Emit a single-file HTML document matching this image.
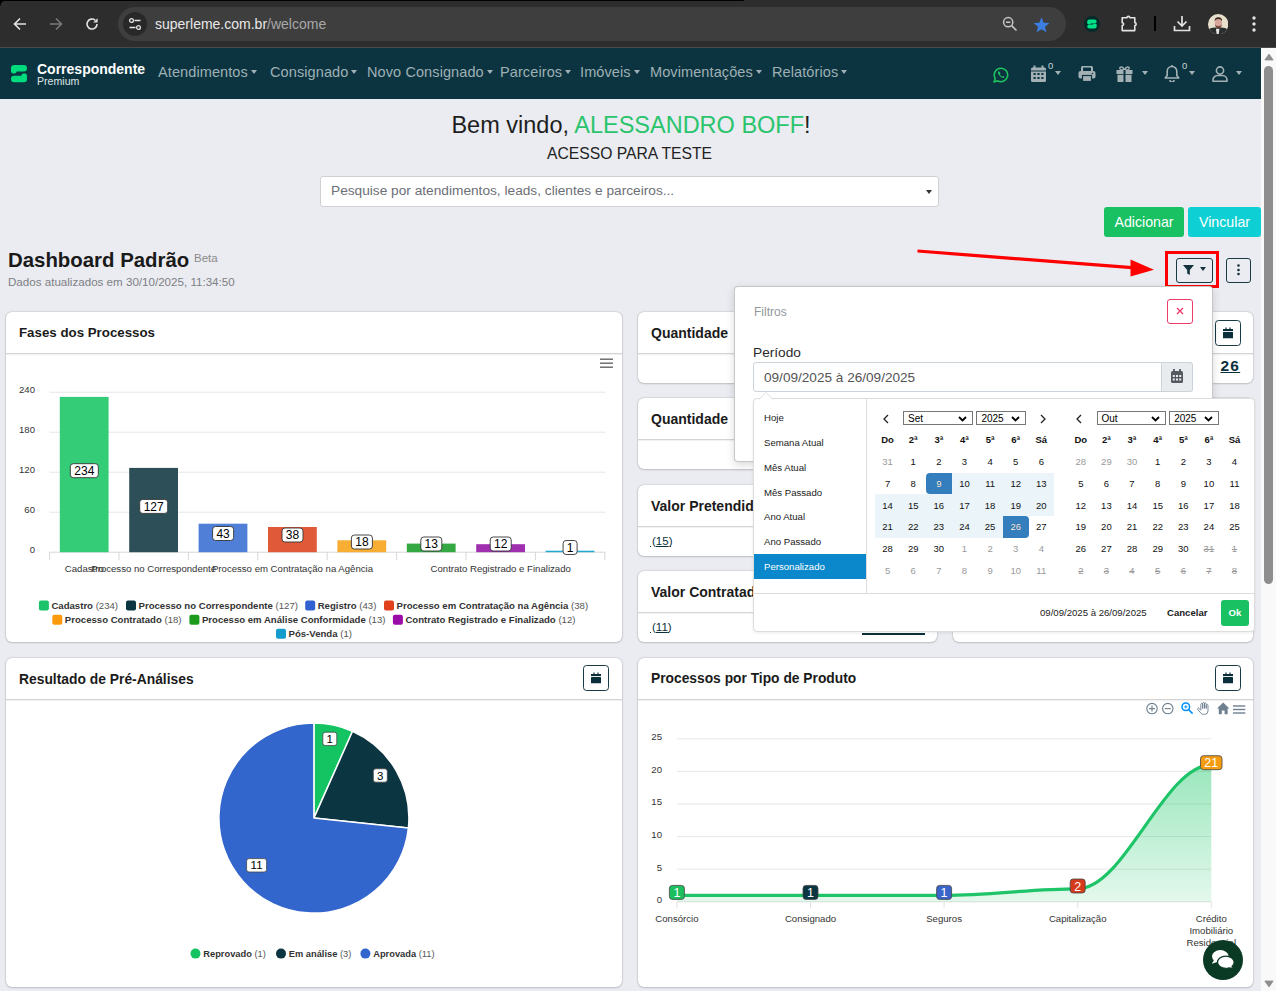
<!DOCTYPE html>
<html><head><meta charset="utf-8">
<style>
*{box-sizing:border-box;margin:0;padding:0}
html,body{width:1276px;height:991px;overflow:hidden;background:#ebecf1;font-family:"Liberation Sans",sans-serif;position:relative}
.a{position:absolute}
.tb{left:0;top:0;width:1276px;height:48px;background:#2d2d2d;border-bottom:1px solid #4a4a4a}
.nav{left:0;top:48px;width:1261px;height:50.5px;background:#0c3440}
.ni{top:64px;font-size:14.5px;color:#9eb0b5;white-space:nowrap;letter-spacing:0.1px}
.car{display:inline-block;width:0;height:0;border-left:3.5px solid transparent;border-right:3.5px solid transparent;border-top:4px solid currentColor;vertical-align:middle;margin-left:3px;margin-top:-2px}
.sb{left:1261px;top:48px;width:15px;height:943px;background:#f9f9f9}
.card{background:#fff;border-radius:6px;box-shadow:0 0 2px rgba(0,0,0,.28),0 1px 2px rgba(0,0,0,.12)}
.ch{position:absolute;left:0;top:0;right:0;height:42px;border-bottom:1px solid #d4d4d4;box-shadow:0 1px 1px rgba(0,0,0,.05)}
.ct{position:absolute;left:13px;top:13px;font-size:14px;font-weight:bold;color:#1b1b1b;white-space:nowrap}
.cd{width:25.6px;text-align:center;font-size:9.5px;color:#111;white-space:nowrap}
.sel{top:411px;height:14px;border:1px solid #767676;background:#fff;font-size:10px;color:#000;padding-left:4px;line-height:14px}
.calbtn{position:absolute;width:26px;height:26px;border:1.1px solid #173a44;border-radius:3.5px;background:#fff}
</style></head><body>
<!-- browser toolbar -->
<div class="a tb"></div>
<div class="a" style="left:0;top:0;width:744px;height:1.2px;background:#000;border-radius:0 0 2px 0"></div><div class="a" style="left:0;top:0;width:6px;height:6px;background:radial-gradient(circle at 100% 100%,transparent 5px,#000 6px)"></div>
<!-- back -->
<svg class="a" style="left:13px;top:17px" width="14" height="14" viewBox="0 0 14 14"><path d="M13 7H2M7 1.5L1.5 7 7 12.5" stroke="#e3e3e3" stroke-width="1.6" fill="none"/></svg>
<svg class="a" style="left:49px;top:17px" width="14" height="14" viewBox="0 0 14 14"><path d="M1 7H12M7 1.5L12.5 7 7 12.5" stroke="#7a7a7a" stroke-width="1.6" fill="none"/></svg>
<svg class="a" style="left:85px;top:17px" width="14" height="14" viewBox="0 0 14 14"><path d="M12 7A5 5 0 1 1 10.2 3.2" stroke="#e3e3e3" stroke-width="1.6" fill="none"/><path d="M12.6 1.2V5.6H8.2Z" fill="#e3e3e3"/></svg>
<div class="a" style="left:118px;top:7px;width:948px;height:34px;border-radius:17px;background:#3e3e3e"></div>
<div class="a" style="left:123px;top:12px;width:24px;height:24px;border-radius:12px;background:#282828"></div>
<svg class="a" style="left:128px;top:17px" width="14" height="14" viewBox="0 0 14 14"><circle cx="3.5" cy="3.5" r="1.9" stroke="#e3e3e3" stroke-width="1.3" fill="none"/><path d="M6.5 3.5H12.5M1.5 10.5H7.5" stroke="#e3e3e3" stroke-width="1.4"/><circle cx="10.5" cy="10.5" r="1.9" stroke="#e3e3e3" stroke-width="1.3" fill="none"/></svg>
<div class="a" style="left:155px;top:16px;font-size:14px;color:#e8e8e8;white-space:nowrap">superleme.com.br<span style="color:#a8a8a8">/welcome</span></div>
<svg class="a" style="left:1002px;top:16px" width="16" height="16" viewBox="0 0 16 16"><circle cx="6.2" cy="6.2" r="4.6" stroke="#c8c8c8" stroke-width="1.5" fill="none"/><path d="M4 6.2H8.4M9.6 9.6L14.5 14.5" stroke="#c8c8c8" stroke-width="1.5"/></svg>
<svg class="a" style="left:1033px;top:17px" width="17" height="16" viewBox="0 0 24 23"><path d="M12 0.5L15.1 8.2 23.4 8.7 17 14 19.1 22.1 12 17.6 4.9 22.1 7 14 0.6 8.7 8.9 8.2Z" fill="#3b7de0"/></svg>
<div class="a" style="left:1084px;top:15.8px;width:16px;height:16px;border-radius:8px;background:#062a2a"></div><svg class="a" style="left:1086px;top:18px" width="12" height="12" viewBox="0 0 12 12"><rect x="1.3" y="1.4" width="9.3" height="4.2" rx="2.1" fill="#00e087"/><rect x="1.3" y="3.4" width="3.4" height="2.8" rx="1" fill="#00e087"/><rect x="1.3" y="6.4" width="9.3" height="4.2" rx="2.1" fill="#00e087"/><rect x="7.2" y="5.8" width="3.4" height="2.8" rx="1" fill="#00e087"/></svg>
<svg class="a" style="left:1119px;top:14px" width="20" height="20" viewBox="0 0 20 20"><path d="M3.2 3.8H8A1.4 1.4 0 0 1 10.8 3.8H15.8V8.7A1.4 1.4 0 0 1 15.8 11.5V16.6H3.2V11.5A1.4 1.4 0 0 0 3.2 8.7Z" stroke="#e3e3e3" stroke-width="1.6" fill="none" stroke-linejoin="round"/></svg>
<div class="a" style="left:1154px;top:16px;width:2px;height:15px;background:#000"></div>
<svg class="a" style="left:1173px;top:15px" width="18" height="17" viewBox="0 0 18 17"><path d="M9 1V11M4.5 6.5L9 11 13.5 6.5M1.5 11V15.5H16.5V11" stroke="#e3e3e3" stroke-width="1.7" fill="none"/></svg>
<svg class="a" style="left:1208px;top:14px" width="20.4" height="20.4" viewBox="0 0 20 20"><defs><clipPath id="av"><circle cx="10" cy="10" r="10"/></clipPath></defs><g clip-path="url(#av)"><rect width="20" height="20" fill="#e6e0cc"/><path d="M0 20V15.5Q3 13.2 7 13.3H13Q17 13.2 20 15.5V20Z" fill="#2a2e2e"/><path d="M7.8 14.5H11.2L10.5 20H8.5Z" fill="#e9e9e9"/><ellipse cx="10.2" cy="8.6" rx="3.6" ry="5.2" fill="#d7a79c"/><path d="M6.5 7Q6.3 3.3 10.2 3.2 14 3.3 13.8 7 12.8 5 10.2 5 7.5 5 6.5 7Z" fill="#3a2a22"/><path d="M6.8 10Q7.5 14 10.2 14.2 12.9 14 13.6 10 12.5 12 10.2 12.1 7.9 12 6.8 10Z" fill="#6a4234"/></g></svg>
<svg class="a" style="left:1251px;top:16px" width="6" height="16" viewBox="0 0 6 16"><circle cx="3" cy="2" r="1.7" fill="#e3e3e3"/><circle cx="3" cy="8" r="1.7" fill="#e3e3e3"/><circle cx="3" cy="14" r="1.7" fill="#e3e3e3"/></svg>
<!-- nav -->
<div class="a nav"></div>
<!-- logo -->
<svg class="a" style="left:10px;top:64px" width="18" height="19" viewBox="0 0 18 19"><rect x="1" y="1" width="16" height="6.6" rx="3.3" fill="#00dc7d"/><rect x="1" y="4" width="5.6" height="5.4" rx="2.2" fill="#00dc7d"/><rect x="1" y="11.8" width="16" height="6.4" rx="3.2" fill="#00dc7d"/><rect x="11.4" y="9.6" width="5.6" height="5.2" rx="2.2" fill="#00dc7d"/></svg>
<div class="a" style="left:37px;top:61px;font-size:14px;font-weight:bold;color:#fff;white-space:nowrap">Correspondente</div>
<div class="a" style="left:37px;top:74.5px;font-size:10.6px;color:#dfe5e6;white-space:nowrap">Premium</div>
<div class="a ni" style="left:158px">Atendimentos<i class="car"></i></div>
<div class="a ni" style="left:270px">Consignado<i class="car"></i></div>
<div class="a ni" style="left:367px">Novo Consignado<i class="car"></i></div>
<div class="a ni" style="left:500px">Parceiros<i class="car"></i></div>
<div class="a ni" style="left:580px">Imóveis<i class="car"></i></div>
<div class="a ni" style="left:650px">Movimentações<i class="car"></i></div>
<div class="a ni" style="left:772px">Relatórios<i class="car"></i></div>
<!-- right icons -->
<svg class="a" style="left:992.8px;top:66.5px" width="16" height="16" viewBox="0 0 16 16"><path d="M8 1.2A6.7 6.7 0 0 0 2.2 11.3L1.2 14.8 4.8 13.8A6.7 6.7 0 1 0 8 1.2Z" stroke="#1ec75e" stroke-width="1.5" fill="none"/><path d="M5.3 4.6C5 5 4.8 5.6 5.2 6.6 5.8 8.2 7.4 10 9.4 10.7 10.3 11 10.9 10.8 11.2 10.4L11.4 9.7 10 9 9.4 9.7C8.4 9.3 7.2 8.2 6.8 7.2L7.4 6.5 6.8 5 6 4.5Z" fill="#1ec75e"/></svg>
<svg class="a" style="left:1031px;top:65px" width="15" height="17" viewBox="0 0 15 17"><path d="M3.5 0.5V3M11.5 0.5V3" stroke="#a3b1b5" stroke-width="2"/><rect x="0" y="2.5" width="15" height="14.5" rx="1.5" fill="#a3b1b5"/><rect x="0" y="5.5" width="15" height="1" fill="#0c3440"/><g fill="#0c3440"><rect x="2.5" y="8" width="2.2" height="2"/><rect x="6.4" y="8" width="2.2" height="2"/><rect x="10.3" y="8" width="2.2" height="2"/><rect x="2.5" y="12" width="2.2" height="2"/><rect x="6.4" y="12" width="2.2" height="2"/><rect x="10.3" y="12" width="2.2" height="2"/></g></svg>
<div class="a" style="left:1048px;top:60px;font-size:9.5px;color:#c9d3d6">0</div>
<i class="a car" style="left:1052px;top:73px;color:#a3b1b5"></i>
<svg class="a" style="left:1078px;top:66px" width="18" height="16" viewBox="0 0 18 16"><path d="M4 5V2A1.5 1.5 0 0 1 5.5 0.5H12.5A1.5 1.5 0 0 1 14 2V5" stroke="#a3b1b5" stroke-width="2" fill="none"/><rect x="0.5" y="5" width="17" height="7.5" rx="2" fill="#a3b1b5"/><rect x="4.5" y="9.5" width="9" height="6" fill="#a3b1b5" stroke="#0c3440" stroke-width="1.2"/><circle cx="14.5" cy="7.5" r="0.8" fill="#0c3440"/></svg>
<svg class="a" style="left:1116px;top:66px" width="17" height="16" viewBox="0 0 17 16"><path d="M8.5 4C7 0 3.5 0.5 3.8 2.5 4 4 6.5 4 8.5 4 10.5 4 13 4 13.2 2.5 13.5 0.5 10 0 8.5 4Z" stroke="#a3b1b5" stroke-width="1.4" fill="none"/><rect x="0.5" y="4" width="16" height="4" fill="#a3b1b5"/><rect x="1.5" y="8.8" width="14" height="7.2" fill="#a3b1b5"/><rect x="7.5" y="4" width="2" height="12" fill="#0c3440"/></svg>
<i class="a car" style="left:1139px;top:73px;color:#a3b1b5"></i>
<svg class="a" style="left:1164px;top:65px" width="16" height="17" viewBox="0 0 16 17"><path d="M8 1.5A4.8 4.8 0 0 0 3.2 6.3V10.5L1.2 13H14.8L12.8 10.5V6.3A4.8 4.8 0 0 0 8 1.5Z" stroke="#a3b1b5" stroke-width="1.6" fill="none" stroke-linejoin="round"/><path d="M8 0V1.6M6 15A2 2 0 0 0 10 15" stroke="#a3b1b5" stroke-width="1.6" fill="none"/></svg>
<div class="a" style="left:1182px;top:60px;font-size:9.5px;color:#c9d3d6">0</div>
<i class="a car" style="left:1186px;top:73px;color:#a3b1b5"></i>
<svg class="a" style="left:1212px;top:66px" width="16" height="16" viewBox="0 0 16 16"><circle cx="8" cy="4.5" r="3.6" stroke="#a3b1b5" stroke-width="1.6" fill="none"/><path d="M1 15.2V14A4.5 4.5 0 0 1 5.5 9.5H10.5A4.5 4.5 0 0 1 15 14V15.2Z" stroke="#a3b1b5" stroke-width="1.6" fill="none" stroke-linejoin="round"/></svg>
<i class="a car" style="left:1233px;top:73px;color:#a3b1b5"></i>
<!-- welcome -->
<div class="a" style="left:0;top:112px;width:1262px;text-align:center;font-size:23.5px;color:#1e1e1e;white-space:nowrap">Bem vindo, <span style="color:#2ac46d">ALESSANDRO BOFF</span>!</div>
<div class="a" style="left:547px;top:145px;font-size:15.7px;color:#222;white-space:nowrap">ACESSO PARA TESTE</div>
<div class="a" style="left:320px;top:176px;width:619px;height:31px;background:#fff;border:1px solid #cfd1d6;border-radius:3px"></div>
<div class="a" style="left:331px;top:183px;font-size:13.7px;color:#6c6f76;white-space:nowrap">Pesquise por atendimentos, leads, clientes e parceiros...</div>
<i class="a car" style="left:923px;top:192px;color:#333;border-top-width:4px;border-left-width:3px;border-right-width:3px"></i>
<div class="a" style="left:1104px;top:207px;width:80px;height:30px;background:#19c163;border-radius:3px;color:#fff;font-size:14.2px;line-height:30px;text-align:center">Adicionar</div>
<div class="a" style="left:1188px;top:207px;width:73px;height:30px;background:#0ed0d4;border-radius:3px;color:#fff;font-size:14.2px;line-height:30px;text-align:center">Vincular</div>
<div class="a" style="left:8px;top:249px;font-size:20.4px;font-weight:bold;color:#1a1a1a;white-space:nowrap">Dashboard Padrão</div>
<div class="a" style="left:194px;top:252px;font-size:11.5px;color:#8a8a8a;white-space:nowrap">Beta</div>
<div class="a" style="left:8px;top:275px;font-size:11.6px;color:#7d7f85;white-space:nowrap">Dados atualizados em 30/10/2025, 11:34:50</div>
<!-- cards -->
<!--C1-->
<div class="a card" style="left:6px;top:312px;width:616px;height:330px"><div class="ch"></div><div class="ct" style="font-size:13.3px">Fases dos Processos</div></div>
<svg class="a" style="left:0;top:300px" width="640" height="350" viewBox="0 300 640 350" font-family="Liberation Sans, sans-serif"><rect x="600" y="358.5" width="13" height="1.4" fill="#666"/><rect x="600" y="362.5" width="13" height="1.4" fill="#666"/><rect x="600" y="366.5" width="13" height="1.4" fill="#666"/><text x="35" y="553.2" font-size="9.6" fill="#333" text-anchor="end">0</text><rect x="49.5" y="511.7" width="556" height="1" fill="#e6e6e6"/><text x="35" y="513.2" font-size="9.6" fill="#333" text-anchor="end">60</text><rect x="49.5" y="471.7" width="556" height="1" fill="#e6e6e6"/><text x="35" y="473.2" font-size="9.6" fill="#333" text-anchor="end">120</text><rect x="49.5" y="431.7" width="556" height="1" fill="#e6e6e6"/><text x="35" y="433.2" font-size="9.6" fill="#333" text-anchor="end">180</text><rect x="49.5" y="391.7" width="556" height="1" fill="#e6e6e6"/><text x="35" y="393.2" font-size="9.6" fill="#333" text-anchor="end">240</text><rect x="49.5" y="551.7" width="556" height="1" fill="#d8d8d8"/><rect x="49.1" y="552.2" width="1" height="8" fill="#d8d8d8"/><rect x="118.5" y="552.2" width="1" height="8" fill="#d8d8d8"/><rect x="187.9" y="552.2" width="1" height="8" fill="#d8d8d8"/><rect x="257.3" y="552.2" width="1" height="8" fill="#d8d8d8"/><rect x="326.7" y="552.2" width="1" height="8" fill="#d8d8d8"/><rect x="396.1" y="552.2" width="1" height="8" fill="#d8d8d8"/><rect x="465.5" y="552.2" width="1" height="8" fill="#d8d8d8"/><rect x="534.9" y="552.2" width="1" height="8" fill="#d8d8d8"/><rect x="604.3" y="552.2" width="1" height="8" fill="#d8d8d8"/><rect x="59.8" y="396.9" width="48.8" height="155.3" fill="#35cc77"/><rect x="129.2" y="467.9" width="48.8" height="84.3" fill="#2d4f58"/><rect x="198.6" y="523.7" width="48.8" height="28.5" fill="#4f7fd6"/><rect x="268.0" y="527.0" width="48.8" height="25.2" fill="#e05a3a"/><rect x="337.4" y="540.3" width="48.8" height="11.9" fill="#f8ad33"/><rect x="406.8" y="543.6" width="48.8" height="8.6" fill="#33a843"/><rect x="476.2" y="544.2" width="48.8" height="8.0" fill="#a02fb0"/><rect x="545.6" y="550.7" width="48.8" height="1.5" fill="#24a9d1"/><rect x="70.3" y="463.7" width="28" height="14" rx="3" fill="#fff" stroke="#333" stroke-width="0.9"/><text x="84.3" y="475.0" font-size="12" fill="#000" text-anchor="middle">234</text><rect x="139.7" y="499.4" width="28" height="14" rx="3" fill="#fff" stroke="#333" stroke-width="0.9"/><text x="153.7" y="510.7" font-size="12" fill="#000" text-anchor="middle">127</text><rect x="212.6" y="526.5" width="21" height="14" rx="3" fill="#fff" stroke="#333" stroke-width="0.9"/><text x="223.1" y="537.8" font-size="12" fill="#000" text-anchor="middle">43</text><rect x="282.0" y="528.0" width="21" height="14" rx="3" fill="#fff" stroke="#333" stroke-width="0.9"/><text x="292.5" y="539.3" font-size="12" fill="#000" text-anchor="middle">38</text><rect x="351.4" y="535.0" width="21" height="14" rx="3" fill="#fff" stroke="#333" stroke-width="0.9"/><text x="361.9" y="546.3" font-size="12" fill="#000" text-anchor="middle">18</text><rect x="420.8" y="537.0" width="21" height="14" rx="3" fill="#fff" stroke="#333" stroke-width="0.9"/><text x="431.3" y="548.3" font-size="12" fill="#000" text-anchor="middle">13</text><rect x="490.2" y="537.0" width="21" height="14" rx="3" fill="#fff" stroke="#333" stroke-width="0.9"/><text x="500.7" y="548.3" font-size="12" fill="#000" text-anchor="middle">12</text><rect x="563.1" y="540.5" width="14" height="14" rx="3" fill="#fff" stroke="#333" stroke-width="0.9"/><text x="570.1" y="551.8" font-size="12" fill="#000" text-anchor="middle">1</text><text x="84.3" y="571.5" font-size="9.6" fill="#333" text-anchor="middle">Cadastro</text><text x="153.7" y="571.5" font-size="9.6" fill="#333" text-anchor="middle">Processo no Correspondente</text><text x="292.5" y="571.5" font-size="9.6" fill="#333" text-anchor="middle">Processo em Contratação na Agência</text><text x="500.7" y="571.5" font-size="9.6" fill="#333" text-anchor="middle">Contrato Registrado e Finalizado</text><rect x="38.9" y="600.6" width="10" height="10" rx="2" fill="#1bc46a"/><text x="51.4" y="609.0" font-size="9.6" fill="#333"><tspan font-weight="bold">Cadastro</tspan> <tspan fill="#555">(234)</tspan></text><rect x="126.0" y="600.6" width="10" height="10" rx="2" fill="#0b3540"/><text x="138.5" y="609.0" font-size="9.6" fill="#333"><tspan font-weight="bold">Processo no Correspondente</tspan> <tspan fill="#555">(127)</tspan></text><rect x="305.2" y="600.6" width="10" height="10" rx="2" fill="#3160d0"/><text x="317.7" y="609.0" font-size="9.6" fill="#333"><tspan font-weight="bold">Registro</tspan> <tspan fill="#555">(43)</tspan></text><rect x="384.0" y="600.6" width="10" height="10" rx="2" fill="#e0401b"/><text x="396.5" y="609.0" font-size="9.6" fill="#333"><tspan font-weight="bold">Processo em Contratação na Agência</tspan> <tspan fill="#555">(38)</tspan></text><rect x="52.3" y="614.7" width="10" height="10" rx="2" fill="#fb9a0c"/><text x="64.8" y="623.1" font-size="9.6" fill="#333"><tspan font-weight="bold">Processo Contratado</tspan> <tspan fill="#555">(18)</tspan></text><rect x="189.4" y="614.7" width="10" height="10" rx="2" fill="#1c9a1c"/><text x="201.9" y="623.1" font-size="9.6" fill="#333"><tspan font-weight="bold">Processo em Análise Conformidade</tspan> <tspan fill="#555">(13)</tspan></text><rect x="392.9" y="614.7" width="10" height="10" rx="2" fill="#9a0ca8"/><text x="405.4" y="623.1" font-size="9.6" fill="#333"><tspan font-weight="bold">Contrato Registrado e Finalizado</tspan> <tspan fill="#555">(12)</tspan></text><rect x="276.0" y="628.8" width="10" height="10" rx="2" fill="#149ccc"/><text x="288.5" y="637.2" font-size="9.6" fill="#333"><tspan font-weight="bold">Pós-Venda</tspan> <tspan fill="#555">(1)</tspan></text></svg>
<!--/C1-->
<!--C2-->
<div class="a card" style="left:638px;top:312px;width:299px;height:71px"><div class="ch"></div><div class="ct" style="font-size:14px">Quantidade</div></div>
<div class="a card" style="left:953px;top:312px;width:300px;height:71px"><div class="ch"></div></div>
<div class="a card" style="left:638px;top:398px;width:299px;height:71px"><div class="ch"></div><div class="ct" style="font-size:14px">Quantidade</div></div>
<div class="a card" style="left:953px;top:398px;width:300px;height:71px"><div class="ch"></div></div>
<div class="a card" style="left:638px;top:485px;width:299px;height:71px"><div class="ch"></div><div class="ct" style="font-size:14px">Valor Pretendido</div></div>
<div class="a card" style="left:953px;top:485px;width:300px;height:71px"><div class="ch"></div></div>
<div class="a card" style="left:638px;top:571px;width:299px;height:71px"><div class="ch"></div><div class="ct" style="font-size:14px">Valor Contratado</div></div>
<div class="a card" style="left:953px;top:571px;width:300px;height:71px"><div class="ch"></div></div>
<div class="a" style="left:652px;top:535px;font-size:11.5px;color:#0b2f3a;white-space:nowrap">(<u>15</u>)</div><div class="a" style="left:650px;top:546px;width:1.2px;height:1.2px;background:#0b2f3a"></div><div class="a" style="left:670px;top:546px;width:1.2px;height:1.2px;background:#0b2f3a"></div>
<div class="a" style="left:652px;top:621px;font-size:11.5px;color:#0b2f3a;white-space:nowrap">(<u>11</u>)</div><div class="a" style="left:650px;top:632px;width:1.2px;height:1.2px;background:#0b2f3a"></div><div class="a" style="left:668px;top:632px;width:1.2px;height:1.2px;background:#0b2f3a"></div>
<div class="a" style="left:862px;top:633px;width:63px;height:1.5px;background:#0b2f3a"></div>
<div class="a" style="left:1220.5px;top:357px;font-size:15.5px;font-weight:bold;color:#0b2f3a;text-decoration:underline;white-space:nowrap;letter-spacing:1.2px">26</div>
<div class="calbtn" style="left:1215px;top:320px"><svg width="10" height="12" viewBox="0 0 10 12" style="position:absolute;left:7px;top:6px"><path d="M3 0.5V2.5M7 0.5V2.5" stroke="#0b2f3a" stroke-width="1.2"/><rect x="0" y="2" width="10" height="2.1" fill="#0b2f3a"/><rect x="0" y="4.9" width="10" height="6.4" rx="0.6" fill="#0b2f3a"/></svg></div>
<!--/C2-->
<!--C3-->
<div class="a card" style="left:6px;top:658px;width:616px;height:329px"><div class="ch"></div><div class="ct" style="font-size:13.85px">Resultado de Pré-Análises</div></div>
<div class="calbtn" style="left:583px;top:665px"><svg width="10" height="12" viewBox="0 0 10 12" style="position:absolute;left:7px;top:6px"><path d="M3 0.5V2.5M7 0.5V2.5" stroke="#0b2f3a" stroke-width="1.2"/><rect x="0" y="2" width="10" height="2.1" fill="#0b2f3a"/><rect x="0" y="4.9" width="10" height="6.4" rx="0.6" fill="#0b2f3a"/></svg></div>
<div class="a card" style="left:638px;top:658px;width:615px;height:329px"><div class="ch"></div><div class="ct" style="font-size:13.8px">Processos por Tipo de Produto</div></div>
<div class="calbtn" style="left:1215px;top:665px"><svg width="10" height="12" viewBox="0 0 10 12" style="position:absolute;left:7px;top:6px"><path d="M3 0.5V2.5M7 0.5V2.5" stroke="#0b2f3a" stroke-width="1.2"/><rect x="0" y="2" width="10" height="2.1" fill="#0b2f3a"/><rect x="0" y="4.9" width="10" height="6.4" rx="0.6" fill="#0b2f3a"/></svg></div>
<svg class="a" style="left:0;top:700px" width="1262" height="290" viewBox="0 700 1262 290" font-family="Liberation Sans, sans-serif"><path d="M313.9 818.1L313.90 723.10A95 95 0 0 1 352.54 731.31Z" fill="#14c462" stroke="#fff" stroke-width="1.5" stroke-linejoin="round"/><path d="M313.9 818.1L352.54 731.31A95 95 0 0 1 408.38 828.03Z" fill="#0b3540" stroke="#fff" stroke-width="1.5" stroke-linejoin="round"/><path d="M313.9 818.1L408.38 828.03A95 95 0 1 1 313.90 723.10Z" fill="#3366cc" stroke="#fff" stroke-width="1.5" stroke-linejoin="round"/><rect x="322.8" y="732.2" width="14" height="13.4" rx="2.5" fill="#fff" stroke="#444" stroke-width="0.8"/><text x="329.8" y="742.9" font-size="11.5" fill="#000" text-anchor="middle">1</text><rect x="373.3" y="768.8" width="14" height="13.4" rx="2.5" fill="#fff" stroke="#444" stroke-width="0.8"/><text x="380.3" y="779.5" font-size="11.5" fill="#000" text-anchor="middle">3</text><rect x="246.6" y="858.6" width="20" height="13.4" rx="2.5" fill="#fff" stroke="#444" stroke-width="0.8"/><text x="256.6" y="869.3" font-size="11.5" fill="#000" text-anchor="middle">11</text><circle cx="195.5" cy="953.6" r="5" fill="#14c462"/><text x="203.3" y="956.8" font-size="9.3" fill="#333"><tspan font-weight="bold">Reprovado</tspan> <tspan fill="#555">(1)</tspan></text><circle cx="281" cy="953.6" r="5" fill="#0b3540"/><text x="288.8" y="956.8" font-size="9.3" fill="#333"><tspan font-weight="bold">Em análise</tspan> <tspan fill="#555">(3)</tspan></text><circle cx="365.4" cy="953.6" r="5" fill="#3366cc"/><text x="373.2" y="956.8" font-size="9.3" fill="#333"><tspan font-weight="bold">Aprovada</tspan> <tspan fill="#555">(11)</tspan></text><rect x="676.9" y="901.3" width="534.4" height="1" fill="#e0e0e0"/><text x="662" y="903.1" font-size="9.6" fill="#333" text-anchor="end">0</text><rect x="676.9" y="868.7" width="534.4" height="1" fill="#e6e6e6"/><text x="662" y="870.5" font-size="9.6" fill="#333" text-anchor="end">5</text><rect x="676.9" y="836.1" width="534.4" height="1" fill="#e6e6e6"/><text x="662" y="837.9" font-size="9.6" fill="#333" text-anchor="end">10</text><rect x="676.9" y="803.5" width="534.4" height="1" fill="#e6e6e6"/><text x="662" y="805.3" font-size="9.6" fill="#333" text-anchor="end">15</text><rect x="676.9" y="770.9" width="534.4" height="1" fill="#e6e6e6"/><text x="662" y="772.7" font-size="9.6" fill="#333" text-anchor="end">20</text><rect x="676.9" y="738.3" width="534.4" height="1" fill="#e6e6e6"/><text x="662" y="740.1" font-size="9.6" fill="#333" text-anchor="end">25</text><rect x="676.4" y="901.8" width="1" height="6" fill="#e0e0e0"/><rect x="810.0" y="901.8" width="1" height="6" fill="#e0e0e0"/><rect x="943.6" y="901.8" width="1" height="6" fill="#e0e0e0"/><rect x="1077.2" y="901.8" width="1" height="6" fill="#e0e0e0"/><rect x="1210.8" y="901.8" width="1" height="6" fill="#e0e0e0"/><defs><linearGradient id="gf" x1="0" y1="0" x2="0" y2="1"><stop offset="0" stop-color="#1ec86a" stop-opacity="0.45"/><stop offset="1" stop-color="#1ec86a" stop-opacity="0.12"/></linearGradient></defs><path d="M676.9 895.3C723.7 895.3 763.7 895.3 810.5 895.3C857.3 895.3 897.3 895.3 944.1 895.3C990.9 895.3 1030.9 888.8 1077.7 888.8C1124.5 888.8 1164.5 764.9 1211.3 764.9L1211.3 901.8L676.9 901.8Z" fill="url(#gf)" transform="translate(0,0)"/><path d="M676.9 895.3C723.7 895.3 763.7 895.3 810.5 895.3C857.3 895.3 897.3 895.3 944.1 895.3C990.9 895.3 1030.9 888.8 1077.7 888.8C1124.5 888.8 1164.5 764.9 1211.3 764.9" fill="none" stroke="#1ec468" stroke-width="3.2"/><rect x="669.4" y="885.4" width="15" height="14" rx="3" fill="#1bbf5e" stroke="#444" stroke-width="0.8"/><text x="676.9" y="897.0" font-size="12.5" fill="#fff" text-anchor="middle">1</text><rect x="803.0" y="885.4" width="15" height="14" rx="3" fill="#0b3540" stroke="#444" stroke-width="0.8"/><text x="810.5" y="897.0" font-size="12.5" fill="#fff" text-anchor="middle">1</text><rect x="936.6" y="885.4" width="15" height="14" rx="3" fill="#3b64c8" stroke="#444" stroke-width="0.8"/><text x="944.1" y="897.0" font-size="12.5" fill="#fff" text-anchor="middle">1</text><rect x="1070.2" y="879.0" width="15" height="14" rx="3" fill="#d63a1c" stroke="#444" stroke-width="0.8"/><text x="1077.7" y="890.6" font-size="12.5" fill="#fff" text-anchor="middle">2</text><rect x="1200.5" y="755.7" width="21.5" height="14" rx="3" fill="#f59b0f" stroke="#444" stroke-width="0.8"/><text x="1211.3" y="767.3" font-size="12.5" fill="#fff" text-anchor="middle">21</text><text x="676.9" y="921.8" font-size="9.6" fill="#333" text-anchor="middle">Consórcio</text><text x="810.5" y="921.8" font-size="9.6" fill="#333" text-anchor="middle">Consignado</text><text x="944.1" y="921.8" font-size="9.6" fill="#333" text-anchor="middle">Seguros</text><text x="1077.7" y="921.8" font-size="9.6" fill="#333" text-anchor="middle">Capitalização</text><text x="1211.3" y="921.8" font-size="9.6" fill="#333" text-anchor="middle">Crédito</text><text x="1211.3" y="933.8" font-size="9.6" fill="#333" text-anchor="middle">Imobiliário</text><text x="1211.3" y="945.8" font-size="9.6" fill="#333" text-anchor="middle">Residencial</text><g fill="none" stroke="#6e7f8f" stroke-width="1.1"><circle cx="1152" cy="708.6" r="5.2"/><path d="M1149 708.6H1155M1152 705.6V711.6"/><circle cx="1167.8" cy="708.6" r="5.2"/><path d="M1164.8 708.6H1170.8"/></g><g fill="none" stroke="#008ffb" stroke-width="1.5"><circle cx="1185.8" cy="706.8" r="3.8"/><path d="M1188.6 709.6L1192.6 713.6"/><path d="M1184.3 706.8H1187.3M1185.8 705.3V708.3" stroke-width="1"/></g><path d="M1200.8 710.2V704.4A0.9 0.9 0 0 1 1202.6 704.4V708.5V703.4A0.9 0.9 0 0 1 1204.4 703.4V708.5V703.8A0.9 0.9 0 0 1 1206.2 703.8V708.5V705.4A0.9 0.9 0 0 1 1208 705.4V711A3.3 3.3 0 0 1 1204.7 714.3H1203.3A3 3 0 0 1 1200.9 713.1L1197.8 709.7A0.9 0.9 0 0 1 1199.2 708.5L1200.8 710.2" stroke="#6e7f8f" stroke-width="0.9" fill="none" stroke-linejoin="round"/><path d="M1217 708.5L1223.2 702.5 1229.4 708.5H1227.6V714.2H1224.6V710.5H1221.8V714.2H1218.8V708.5Z" fill="#6e7f8f"/><g fill="#6e7f8f"><rect x="1233" y="705.3" width="12.3" height="1.4"/><rect x="1233" y="708.8" width="12.3" height="1.4"/><rect x="1233" y="712.3" width="12.3" height="1.4"/></g></svg>
<div class="a" style="left:1203px;top:940px;width:40px;height:40px;border-radius:20px;background:#0b3a24"></div>
<svg class="a" style="left:1208px;top:946px" width="30" height="26" viewBox="0 0 30 26"><ellipse cx="12.3" cy="10.3" rx="8.3" ry="6.2" fill="#fff"/><path d="M6 14L3.8 17.8 10 15.8Z" fill="#fff"/><path d="M17.8 10.2C22.5 10.2 26.2 13 26.2 16.3 26.2 18 25.4 19.3 24.2 20.3L26.5 22.5 20.5 22C19.6 22.3 18.7 22.4 17.8 22.4 13 22.4 9.5 19.6 9.5 16.3 9.5 13 13 10.2 17.8 10.2Z" fill="#fff" stroke="#0b3a24" stroke-width="1.3"/></svg>
<!--/C3-->
<!-- arrow -->
<svg class="a" style="left:0;top:0" width="1262" height="300" viewBox="0 0 1262 300"><path d="M917.5 251L1132 267.6" stroke="#ff0000" stroke-width="3.2"/><path d="M1130.5 259.5L1154 269.8 1130.5 276.5Z" fill="#ff0000"/></svg>
<div class="a" style="left:1165px;top:251px;width:54px;height:37px;border:3.2px solid #ff0000"></div>
<div class="a" style="left:1176px;top:258px;width:37px;height:25px;border:1.4px solid #173a44;border-radius:3px"></div>
<svg class="a" style="left:1183px;top:265px" width="11" height="10" viewBox="0 0 11 10"><path d="M0 0H11L6.8 5V10L4.2 8.4V5Z" fill="#14333d"/></svg>
<i class="a car" style="left:1197px;top:269px;color:#14333d"></i>
<div class="a" style="left:1226px;top:258px;width:25px;height:25px;border:1.4px solid #173a44;border-radius:3px"></div>
<svg class="a" style="left:1236px;top:263px" width="5" height="14" viewBox="0 0 5 14"><circle cx="2.5" cy="2.5" r="1.3" fill="#14333d"/><circle cx="2.5" cy="7" r="1.3" fill="#14333d"/><circle cx="2.5" cy="11" r="1.3" fill="#14333d"/></svg>
<!--P-->
<div class="a" style="left:733.5px;top:285.5px;width:479px;height:176.5px;background:#fff;border-radius:4px;border:1px solid rgba(0,0,0,.22);box-shadow:0 3px 8px rgba(0,0,0,.15)"></div>
<div class="a" style="left:754px;top:304.5px;font-size:12px;color:#94979c">Filtros</div>
<div class="a" style="left:1167px;top:299px;width:26px;height:25px;border:1.2px solid #ec3b6a;border-radius:3px"></div>
<svg class="a" style="left:1176px;top:307px" width="8" height="8" viewBox="0 0 8 8"><path d="M1 1L7 7M7 1L1 7" stroke="#ec3b6a" stroke-width="1.4"/></svg>
<div class="a" style="left:753px;top:344.7px;font-size:13.7px;color:#2a2a2a">Período</div>
<div class="a" style="left:753px;top:362px;width:440px;height:30px;border:1px solid #cdd3da;border-radius:3px;background:#fff"></div>
<div class="a" style="left:1161px;top:362px;width:32px;height:30px;border:1px solid #cdd3da;border-radius:0 3px 3px 0;background:#e9ecef"></div>
<svg class="a" style="left:1171px;top:369px" width="12" height="14" viewBox="0 0 12 14"><path d="M3 0V2.5M9 0V2.5" stroke="#555a60" stroke-width="1.8"/><rect x="0" y="2" width="12" height="12" rx="1.5" fill="#555a60"/><g fill="#e9ecef"><rect x="1.8" y="6" width="2" height="2"/><rect x="5" y="6" width="2" height="2"/><rect x="8.2" y="6" width="2" height="2"/><rect x="1.8" y="9.5" width="2" height="2"/><rect x="5" y="9.5" width="2" height="2"/><rect x="8.2" y="9.5" width="2" height="2"/></g></svg>
<div class="a" style="left:764px;top:369.7px;font-size:13.6px;color:#555">09/09/2025 à 26/09/2025</div>
<div class="a" style="left:753px;top:398px;width:502px;height:234px;background:#fff;border:1px solid #ddd;border-radius:4px;box-shadow:0 1px 3px rgba(0,0,0,.08)"></div>
<svg class="a" style="left:758px;top:391px" width="18" height="9" viewBox="0 0 18 9"><path d="M1 8.5L8 1.5 15 8.5" fill="#fff" stroke="#ddd" stroke-width="1"/></svg>
<div class="a" style="left:866px;top:399px;width:1px;height:194px;background:#ddd"></div>
<div class="a" style="left:754px;top:593px;width:500px;height:1px;background:#ddd"></div>
<div class="a" style="left:764px;top:412.0px;font-size:9.6px;color:#222;white-space:nowrap">Hoje</div>
<div class="a" style="left:764px;top:436.8px;font-size:9.6px;color:#222;white-space:nowrap">Semana Atual</div>
<div class="a" style="left:764px;top:461.7px;font-size:9.6px;color:#222;white-space:nowrap">Mês Atual</div>
<div class="a" style="left:764px;top:486.9px;font-size:9.6px;color:#222;white-space:nowrap">Mês Passado</div>
<div class="a" style="left:764px;top:510.9px;font-size:9.6px;color:#222;white-space:nowrap">Ano Atual</div>
<div class="a" style="left:764px;top:535.9px;font-size:9.6px;color:#222;white-space:nowrap">Ano Passado</div>
<div class="a" style="left:754px;top:554px;width:112px;height:24.5px;background:#0a88cb"></div>
<div class="a" style="left:764px;top:560.8px;font-size:9.6px;color:#fff;white-space:nowrap">Personalizado</div>
<div class="a" style="left:951.5px;top:472.5px;width:102.5px;height:21.5px;background:#ebf4f8"></div>
<div class="a" style="left:875px;top:494px;width:179px;height:22px;background:#ebf4f8"></div>
<div class="a" style="left:875px;top:516px;width:128px;height:22px;background:#ebf4f8"></div>
<div class="a" style="left:926px;top:473px;width:26px;height:21px;background:#357ebd;border-radius:4px 0 0 4px"></div>
<div class="a" style="left:1003px;top:516px;width:26px;height:22px;background:#357ebd;border-radius:0 4px 4px 0"></div>
<div class="a cd" style="left:874.8px;top:434.1px;font-weight:bold">Do</div>
<div class="a cd" style="left:900.4px;top:434.1px;font-weight:bold">2ª</div>
<div class="a cd" style="left:926.0px;top:434.1px;font-weight:bold">3ª</div>
<div class="a cd" style="left:951.7px;top:434.1px;font-weight:bold">4ª</div>
<div class="a cd" style="left:977.3px;top:434.1px;font-weight:bold">5ª</div>
<div class="a cd" style="left:1002.9px;top:434.1px;font-weight:bold">6ª</div>
<div class="a cd" style="left:1028.5px;top:434.1px;font-weight:bold">Sá</div>
<div class="a cd" style="left:874.8px;top:455.9px;color:#999">31</div>
<div class="a cd" style="left:900.4px;top:455.9px;color:#111">1</div>
<div class="a cd" style="left:926.0px;top:455.9px;color:#111">2</div>
<div class="a cd" style="left:951.7px;top:455.9px;color:#111">3</div>
<div class="a cd" style="left:977.3px;top:455.9px;color:#111">4</div>
<div class="a cd" style="left:1002.9px;top:455.9px;color:#111">5</div>
<div class="a cd" style="left:1028.5px;top:455.9px;color:#111">6</div>
<div class="a cd" style="left:874.8px;top:477.6px;color:#111">7</div>
<div class="a cd" style="left:900.4px;top:477.6px;color:#111">8</div>
<div class="a cd" style="left:926.0px;top:477.6px;">9</div>
<div class="a cd" style="left:951.7px;top:477.6px;color:#111">10</div>
<div class="a cd" style="left:977.3px;top:477.6px;color:#111">11</div>
<div class="a cd" style="left:1002.9px;top:477.6px;color:#111">12</div>
<div class="a cd" style="left:1028.5px;top:477.6px;color:#111">13</div>
<div class="a cd" style="left:874.8px;top:499.6px;color:#111">14</div>
<div class="a cd" style="left:900.4px;top:499.6px;color:#111">15</div>
<div class="a cd" style="left:926.0px;top:499.6px;color:#111">16</div>
<div class="a cd" style="left:951.7px;top:499.6px;color:#111">17</div>
<div class="a cd" style="left:977.3px;top:499.6px;color:#111">18</div>
<div class="a cd" style="left:1002.9px;top:499.6px;color:#111">19</div>
<div class="a cd" style="left:1028.5px;top:499.6px;color:#111">20</div>
<div class="a cd" style="left:874.8px;top:521.4px;color:#111">21</div>
<div class="a cd" style="left:900.4px;top:521.4px;color:#111">22</div>
<div class="a cd" style="left:926.0px;top:521.4px;color:#111">23</div>
<div class="a cd" style="left:951.7px;top:521.4px;color:#111">24</div>
<div class="a cd" style="left:977.3px;top:521.4px;color:#111">25</div>
<div class="a cd" style="left:1002.9px;top:521.4px;">26</div>
<div class="a cd" style="left:1028.5px;top:521.4px;color:#111">27</div>
<div class="a cd" style="left:874.8px;top:543.0px;color:#111">28</div>
<div class="a cd" style="left:900.4px;top:543.0px;color:#111">29</div>
<div class="a cd" style="left:926.0px;top:543.0px;color:#111">30</div>
<div class="a cd" style="left:951.7px;top:543.0px;color:#999">1</div>
<div class="a cd" style="left:977.3px;top:543.0px;color:#999">2</div>
<div class="a cd" style="left:1002.9px;top:543.0px;color:#999">3</div>
<div class="a cd" style="left:1028.5px;top:543.0px;color:#999">4</div>
<div class="a cd" style="left:874.8px;top:564.8px;color:#999">5</div>
<div class="a cd" style="left:900.4px;top:564.8px;color:#999">6</div>
<div class="a cd" style="left:926.0px;top:564.8px;color:#999">7</div>
<div class="a cd" style="left:951.7px;top:564.8px;color:#999">8</div>
<div class="a cd" style="left:977.3px;top:564.8px;color:#999">9</div>
<div class="a cd" style="left:1002.9px;top:564.8px;color:#999">10</div>
<div class="a cd" style="left:1028.5px;top:564.8px;color:#999">11</div>
<div class="a cd" style="left:1068.0px;top:434.1px;font-weight:bold">Do</div>
<div class="a cd" style="left:1093.6px;top:434.1px;font-weight:bold">2ª</div>
<div class="a cd" style="left:1119.2px;top:434.1px;font-weight:bold">3ª</div>
<div class="a cd" style="left:1144.9px;top:434.1px;font-weight:bold">4ª</div>
<div class="a cd" style="left:1170.5px;top:434.1px;font-weight:bold">5ª</div>
<div class="a cd" style="left:1196.1px;top:434.1px;font-weight:bold">6ª</div>
<div class="a cd" style="left:1221.7px;top:434.1px;font-weight:bold">Sá</div>
<div class="a cd" style="left:1068.0px;top:455.9px;color:#999">28</div>
<div class="a cd" style="left:1093.6px;top:455.9px;color:#999">29</div>
<div class="a cd" style="left:1119.2px;top:455.9px;color:#999">30</div>
<div class="a cd" style="left:1144.9px;top:455.9px;color:#111">1</div>
<div class="a cd" style="left:1170.5px;top:455.9px;color:#111">2</div>
<div class="a cd" style="left:1196.1px;top:455.9px;color:#111">3</div>
<div class="a cd" style="left:1221.7px;top:455.9px;color:#111">4</div>
<div class="a cd" style="left:1068.0px;top:477.6px;color:#111">5</div>
<div class="a cd" style="left:1093.6px;top:477.6px;color:#111">6</div>
<div class="a cd" style="left:1119.2px;top:477.6px;color:#111">7</div>
<div class="a cd" style="left:1144.9px;top:477.6px;color:#111">8</div>
<div class="a cd" style="left:1170.5px;top:477.6px;color:#111">9</div>
<div class="a cd" style="left:1196.1px;top:477.6px;color:#111">10</div>
<div class="a cd" style="left:1221.7px;top:477.6px;color:#111">11</div>
<div class="a cd" style="left:1068.0px;top:499.6px;color:#111">12</div>
<div class="a cd" style="left:1093.6px;top:499.6px;color:#111">13</div>
<div class="a cd" style="left:1119.2px;top:499.6px;color:#111">14</div>
<div class="a cd" style="left:1144.9px;top:499.6px;color:#111">15</div>
<div class="a cd" style="left:1170.5px;top:499.6px;color:#111">16</div>
<div class="a cd" style="left:1196.1px;top:499.6px;color:#111">17</div>
<div class="a cd" style="left:1221.7px;top:499.6px;color:#111">18</div>
<div class="a cd" style="left:1068.0px;top:521.4px;color:#111">19</div>
<div class="a cd" style="left:1093.6px;top:521.4px;color:#111">20</div>
<div class="a cd" style="left:1119.2px;top:521.4px;color:#111">21</div>
<div class="a cd" style="left:1144.9px;top:521.4px;color:#111">22</div>
<div class="a cd" style="left:1170.5px;top:521.4px;color:#111">23</div>
<div class="a cd" style="left:1196.1px;top:521.4px;color:#111">24</div>
<div class="a cd" style="left:1221.7px;top:521.4px;color:#111">25</div>
<div class="a cd" style="left:1068.0px;top:543.0px;color:#111">26</div>
<div class="a cd" style="left:1093.6px;top:543.0px;color:#111">27</div>
<div class="a cd" style="left:1119.2px;top:543.0px;color:#111">28</div>
<div class="a cd" style="left:1144.9px;top:543.0px;color:#111">29</div>
<div class="a cd" style="left:1170.5px;top:543.0px;color:#111">30</div>
<div class="a cd" style="left:1196.1px;top:543.0px;color:#999;text-decoration:line-through">31</div>
<div class="a cd" style="left:1221.7px;top:543.0px;color:#999;text-decoration:line-through">1</div>
<div class="a cd" style="left:1068.0px;top:564.8px;color:#999;text-decoration:line-through">2</div>
<div class="a cd" style="left:1093.6px;top:564.8px;color:#999;text-decoration:line-through">3</div>
<div class="a cd" style="left:1119.2px;top:564.8px;color:#999;text-decoration:line-through">4</div>
<div class="a cd" style="left:1144.9px;top:564.8px;color:#999;text-decoration:line-through">5</div>
<div class="a cd" style="left:1170.5px;top:564.8px;color:#999;text-decoration:line-through">6</div>
<div class="a cd" style="left:1196.1px;top:564.8px;color:#999;text-decoration:line-through">7</div>
<div class="a cd" style="left:1221.7px;top:564.8px;color:#999;text-decoration:line-through">8</div>
<div class="a cd" style="left:926.0px;top:477.6px;color:#fff">9</div>
<div class="a cd" style="left:1002.9px;top:521.4px;color:#fff">26</div>
<svg class="a" style="left:882.2px;top:414px" width="8" height="10" viewBox="0 0 8 10"><path d="M6 1L2 5 6 9" stroke="#222" stroke-width="1.3" fill="none"/></svg>
<div class="a sel" style="left:903px;width:69.5px">Set<svg width="9" height="6" viewBox="0 0 9 6" style="position:absolute;right:5px;top:4px"><path d="M1 1L4.5 4.5 8 1" stroke="#000" stroke-width="1.8" fill="none"/></svg></div>
<div class="a sel" style="left:976.4px;width:49.5px">2025<svg width="9" height="6" viewBox="0 0 9 6" style="position:absolute;right:5px;top:4px"><path d="M1 1L4.5 4.5 8 1" stroke="#000" stroke-width="1.8" fill="none"/></svg></div>
<svg class="a" style="left:1039.2px;top:414px" width="8" height="10" viewBox="0 0 8 10"><path d="M2 1L6 5 2 9" stroke="#222" stroke-width="1.3" fill="none"/></svg>
<svg class="a" style="left:1074.8px;top:414px" width="8" height="10" viewBox="0 0 8 10"><path d="M6 1L2 5 6 9" stroke="#222" stroke-width="1.3" fill="none"/></svg>
<div class="a sel" style="left:1096.5px;width:69px">Out<svg width="9" height="6" viewBox="0 0 9 6" style="position:absolute;right:5px;top:4px"><path d="M1 1L4.5 4.5 8 1" stroke="#000" stroke-width="1.8" fill="none"/></svg></div>
<div class="a sel" style="left:1169.2px;width:49.5px">2025<svg width="9" height="6" viewBox="0 0 9 6" style="position:absolute;right:5px;top:4px"><path d="M1 1L4.5 4.5 8 1" stroke="#000" stroke-width="1.8" fill="none"/></svg></div>
<div class="a" style="left:1040px;top:606.5px;font-size:9.6px;color:#222;white-space:nowrap">09/09/2025 à 26/09/2025</div>
<div class="a" style="left:1167px;top:606.5px;font-size:9.6px;font-weight:bold;color:#222;white-space:nowrap">Cancelar</div>
<div class="a" style="left:1221px;top:600px;width:28px;height:26px;background:#19c163;border-radius:3px;color:#fff;font-size:9.6px;font-weight:bold;line-height:26px;text-align:center">Ok</div>
<!--/P-->
<!-- scrollbar -->
<div class="a sb"></div>
<div class="a" style="left:1264px;top:66px;width:9px;height:518px;border-radius:4.5px;background:#8e8e8e"></div>
<svg class="a" style="left:1263.5px;top:52.5px" width="10" height="8" viewBox="0 0 10 8"><path d="M0.8 7H9.2L5 1Z" fill="#8e8e8e" stroke="#8e8e8e" stroke-width="0.8" stroke-linejoin="round"/></svg>
<svg class="a" style="left:1263.5px;top:980px" width="10" height="8" viewBox="0 0 10 8"><path d="M0.8 1H9.2L5 7Z" fill="#8e8e8e" stroke="#8e8e8e" stroke-width="0.8" stroke-linejoin="round"/></svg>
</body></html>
